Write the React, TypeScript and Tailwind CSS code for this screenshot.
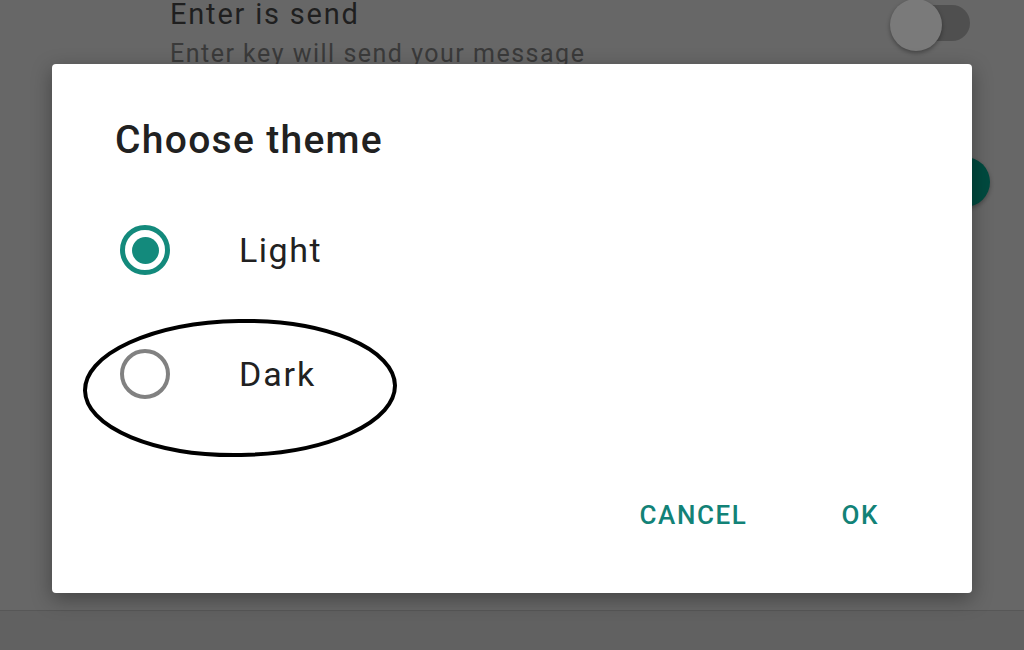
import React from "react";

export default function App() {
  return (
    <div
      className="relative w-[1024px] h-[650px] overflow-hidden bg-[#676767]"
      style={{ fontFamily: "Roboto, 'Noto Sans', sans-serif" }}
    >
      {/* Background settings (dimmed) */}
      <div className="flex flex-col">
        <div className="flex items-start justify-between pl-[170px] pr-[54px]">
          <div className="flex flex-col">
            <div className="text-[29px] leading-[28px] tracking-[1.8px] text-[#1f1f1f]">Enter is send</div>
            <div className="mt-[14px] text-[25px] leading-[24px] tracking-[1.5px] text-[#3a3a3a]">
              Enter key will send your message
            </div>
          </div>
          <div className="relative w-[80px] h-[50px] mt-[-1px]">
            <div className="absolute right-0 top-[6px] w-[62px] h-[36px] rounded-full bg-[#4f4f4f]" />
            <div className="absolute left-0 top-0 w-[52px] h-[52px] rounded-full bg-[#7a7a7a] shadow-[0_2px_4px_rgba(0,0,0,0.35)]" />
          </div>
        </div>
        <div className="flex justify-end pr-[34px] mt-[91px]">
          <div className="w-[50px] h-[50px] rounded-full bg-[#004a3f] shadow-[0_2px_4px_rgba(0,0,0,0.3)]" />
        </div>
      </div>

      {/* bottom divider */}
      <div className="absolute left-0 right-0 top-[610px] bottom-0 border-t border-[#575757] bg-[#616161]" />

      {/* Dialog */}
      <div className="absolute left-[52px] top-[64px] w-[920px] h-[529px] rounded-[4px] bg-white shadow-[0_6px_20px_rgba(0,0,0,0.35)] flex flex-col">
        <div className="pl-[63px] pt-[54px] text-[39px] leading-[44px] tracking-[1.3px] font-medium text-[#212121]">
          Choose theme
        </div>
        <div className="mt-[26px] flex flex-col">
          <div className="h-[124px] flex items-center pl-[68px]">
            <div className="w-[50px] h-[50px] rounded-full border-[5px] border-[#138a7c] flex items-center justify-center">
              <div className="w-[27px] h-[27px] rounded-full bg-[#138a7c]" />
            </div>
            <div className="ml-[69px] text-[34px] leading-[32px] tracking-[1.5px] text-[#212121]">Light</div>
          </div>
          <div className="h-[124px] flex items-center pl-[68px]">
            <div className="w-[50px] h-[50px] rounded-full border-[4px] border-[#818181]" />
            <div className="ml-[69px] text-[34px] leading-[32px] tracking-[1.9px] text-[#212121]">Dark</div>
          </div>
        </div>
        <div className="mt-[55px] h-[48px] flex items-center justify-end pr-[93px] gap-[94px] text-[26px] font-medium text-[#128277] tracking-[1.6px]">
          <span>CANCEL</span>
          <span>OK</span>
        </div>
      </div>

      {/* hand-drawn annotation ellipse */}
      <svg className="absolute left-0 top-0" width="1024" height="650" viewBox="0 0 1024 650">
        <ellipse cx="240" cy="388" rx="155" ry="67" fill="none" stroke="#000" strokeWidth="4" transform="rotate(-1 240 388)" />
      </svg>
    </div>
  );
}
